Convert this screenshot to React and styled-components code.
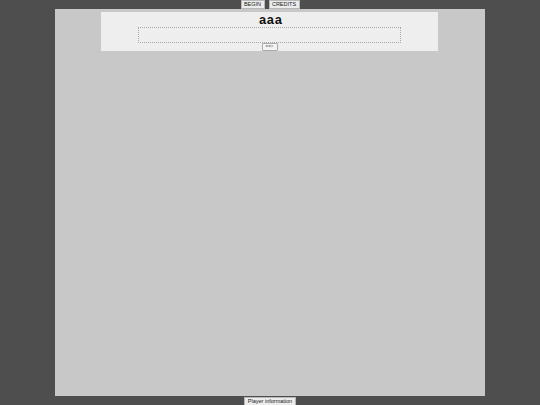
import styled, { createGlobalStyle } from "styled-components";

const GlobalStyle = createGlobalStyle`
  html, body {
    margin: 0;
    padding: 0;
    background: #4e4e4e;
    font-family: "Liberation Sans", Arial, sans-serif;
  }
`;

export default function App() {
  return (
    <Page>
      <GlobalStyle />
      <TopNav>
        <NavButton $w={24}>BEGIN</NavButton>
        <NavButton $w={31}>CREDITS</NavButton>
      </TopNav>
      <Stage>
        <Dialog>
          <Title>aaa</Title>
          <TextArea />
          <NextButton>==&gt;</NextButton>
        </Dialog>
      </Stage>
      <Footer>
        <NavButton $w={52}>Player information</NavButton>
      </Footer>
    </Page>
  );
}

const Page = styled.div`
  width: 540px;
  height: 405px;
  display: flex;
  flex-direction: column;
  align-items: center;
`;

const TopNav = styled.div`
  display: flex;
  gap: 4px;
  height: 9px;
  flex-shrink: 0;
`;

const NavButton = styled.button`
  box-sizing: border-box;
  width: ${(p) => p.$w}px;
  height: 9px;
  padding: 0;
  font-family: "Liberation Sans", Arial, sans-serif;
  font-size: 5.5px;
  line-height: 7px;
  white-space: nowrap;
  color: #222;
  background: #ececec;
  border: 1px solid #b8b8b8;
  border-radius: 0;
`;

const Stage = styled.div`
  width: 430px;
  height: 387px;
  flex-shrink: 0;
  background: #c8c8c8;
  display: flex;
  flex-direction: column;
  align-items: center;
  padding-top: 3px;
  box-sizing: border-box;
`;

const Dialog = styled.div`
  width: 337px;
  height: 39px;
  margin-left: -1px;
  background: #eeeeee;
  display: flex;
  flex-direction: column;
  align-items: center;
  box-sizing: border-box;
  padding-top: 2px;
`;

const Title = styled.div`
  font-family: "Liberation Mono", "Courier New", monospace;
  font-weight: bold;
  font-size: 13px;
  line-height: 13px;
  height: 13px;
  color: #111;
  margin-left: 2px;
`;

const TextArea = styled.div`
  box-sizing: border-box;
  width: 263px;
  height: 16px;
  border: 1px dotted #a8a8a8;
`;

const NextButton = styled.button`
  box-sizing: border-box;
  width: 16px;
  height: 8px;
  padding: 0;
  font-family: "Liberation Sans", Arial, sans-serif;
  font-size: 4.5px;
  line-height: 6px;
  color: #666;
  background: #f4f4f4;
  border: 1px solid #aaa;
  border-radius: 1px;
`;

const Footer = styled.div`
  display: flex;
  justify-content: center;
  padding-top: 1px;
  flex-shrink: 0;
`;
